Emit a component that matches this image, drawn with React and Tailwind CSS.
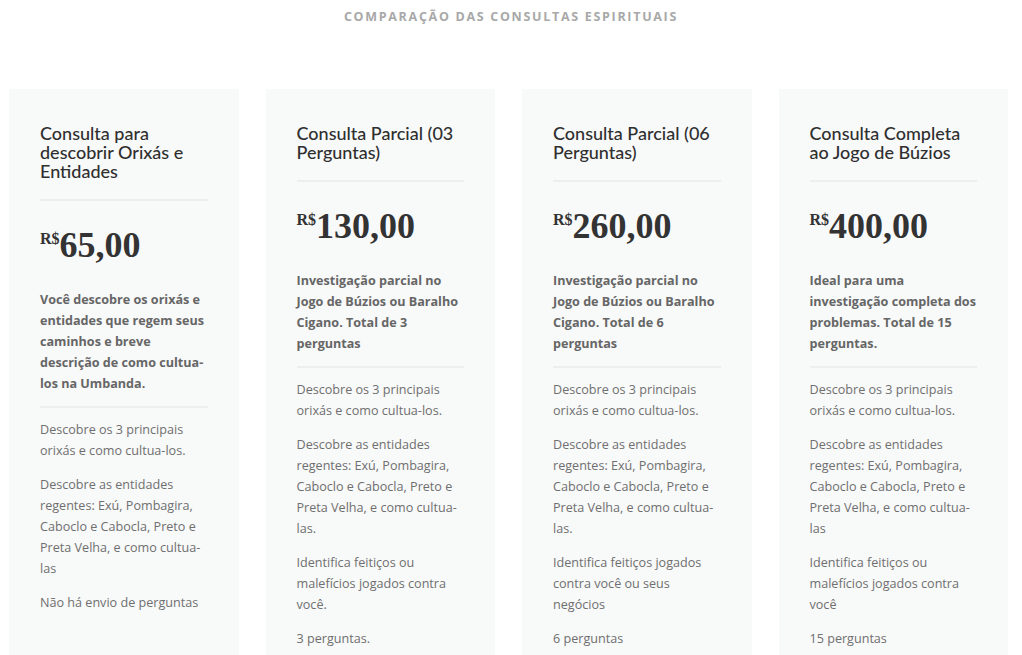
const plans = [
  {
    title: 'Consulta para descobrir Orixás e Entidades',
    price: '65,00',
    summary:
      'Você descobre os orixás e entidades que regem seus caminhos e breve descrição de como cultua-los na Umbanda.',
    features: [
      'Descobre os 3 principais orixás e como cultua-los.',
      'Descobre as entidades regentes: Exú, Pombagira, Caboclo e Cabocla, Preto e Preta Velha, e como cultua-las',
      'Não há envio de perguntas',
    ],
  },
  {
    title: 'Consulta Parcial (03 Perguntas)',
    price: '130,00',
    summary: 'Investigação parcial no Jogo de Búzios ou Baralho Cigano. Total de 3 perguntas',
    features: [
      'Descobre os 3 principais orixás e como cultua-los.',
      'Descobre as entidades regentes: Exú, Pombagira, Caboclo e Cabocla, Preto e Preta Velha, e como cultua-las.',
      'Identifica feitiços ou malefícios jogados contra você.',
      '3 perguntas.',
    ],
  },
  {
    title: 'Consulta Parcial (06 Perguntas)',
    price: '260,00',
    summary: 'Investigação parcial no Jogo de Búzios ou Baralho Cigano. Total de 6 perguntas',
    features: [
      'Descobre os 3 principais orixás e como cultua-los.',
      'Descobre as entidades regentes: Exú, Pombagira, Caboclo e Cabocla, Preto e Preta Velha, e como cultua-las.',
      'Identifica feitiços jogados contra você ou seus negócios',
      '6 perguntas',
    ],
  },
  {
    title: 'Consulta Completa ao Jogo de Búzios',
    price: '400,00',
    summary: 'Ideal para uma investigação completa dos problemas. Total de 15 perguntas.',
    features: [
      'Descobre os 3 principais orixás e como cultua-los.',
      'Descobre as entidades regentes: Exú, Pombagira, Caboclo e Cabocla, Preto e Preta Velha, e como cultua-las',
      'Identifica feitiços ou malefícios jogados contra você',
      '15 perguntas',
    ],
  },
];

function PlanCard({ plan }) {
  return (
    <div className="bg-[#f8f9f9] px-[31px] pt-[35px] pb-16">
      <h3 className="font-['Lato',sans-serif] text-[18px] leading-[19px] font-medium text-[#2f2f2f]">
        {plan.title}
      </h3>
      <div className="mt-[18px] h-[2px] bg-[#eeeeee]" />

      {/* Price */}
      <div className="mt-[26px] flex items-start font-['Liberation_Serif',serif] font-bold text-[#333]">
        <span className="mt-[4px] text-[16px] leading-[16px]">R$</span>
        <span className="text-[36px] leading-[36px]">{plan.price}</span>
      </div>

      <p className="mt-[26px] font-['Open_Sans',sans-serif] text-[12.6px] leading-[21px] font-bold text-[#666]">
        {plan.summary}
      </p>
      <div className="mt-[12px] h-[2px] bg-[#eeeeee]" />

      <div className="mt-[11px] space-y-[13px] font-['Open_Sans',sans-serif] text-[12.6px] leading-[21px] text-[#6f6f6f]">
        {plan.features.map((f) => (
          <p key={f}>{f}</p>
        ))}
      </div>
    </div>
  );
}

export default function App() {
  return (
    <div className="h-screen overflow-hidden bg-white">
      <h2 className="pt-[9px] text-center font-['Open_Sans',sans-serif] text-[12.5px] leading-4 font-bold tracking-[1.7px] text-[#a8a8a8]">
        COMPARAÇÃO DAS CONSULTAS ESPIRITUAIS
      </h2>

      <div className="mt-[64px] ml-[9px] grid grid-cols-[repeat(4,229.5px)] gap-x-[27px]">
        {plans.map((plan) => (
          <PlanCard key={plan.title} plan={plan} />
        ))}
      </div>
    </div>
  );
}
